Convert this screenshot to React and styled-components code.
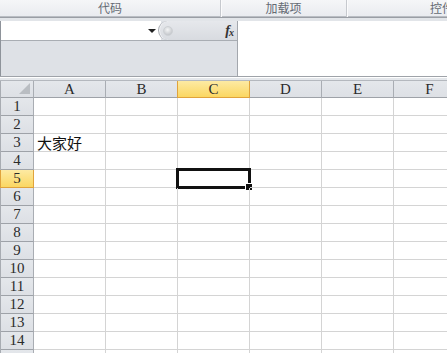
import React from 'react'
import styled, { createGlobalStyle } from 'styled-components'

const GlobalStyle = createGlobalStyle`
    html, body {
        margin: 0;
        padding: 0;
        background: #ffffff;
        overflow: hidden;
    }
    * {
        box-sizing: border-box;
    }
`

const COLUMNS = ['A', 'B', 'C', 'D', 'E', 'F']
const ROWS = Array.from({ length: 15 }, (_, i) => i + 1)
const ACTIVE = { col: 'C', row: 5 }
const CELLS = { A3: '大家好' }

const Page = styled('div')`
    width: 447px;
    height: 353px;
    overflow: hidden;
    font-family: 'Noto Sans CJK SC', sans-serif;
`

const RibbonTabs = styled('div')`
    display: flex;
    height: 18px;
    background: linear-gradient(#f5f6f8, #e9ebef);
    border-bottom: 1px solid #9a9ea5;
    box-shadow: inset 0 -1px 0 #b9bdc3;
`

const TabGroup = styled('div')`
    flex: 0 0 ${({ width }) => width}px;
    display: flex;
    justify-content: ${({ align }) => align || 'center'};
    padding-left: ${({ indent }) => indent || 0}px;
    font-size: 12px;
    line-height: 16px;
    color: #646a73;
    border-right: 1px solid #c6c9ce;
    box-shadow: 1px 0 0 #fbfbfc;
    white-space: nowrap;
`

const Band = styled('div')`
    height: 3px;
    background: #e2e5e9;
`

const FormulaBar = styled('div')`
    display: flex;
    height: 56px;
    border-bottom: 1px solid #9fa3a9;
`

const LeftPanel = styled('div')`
    width: 238px;
    display: flex;
    flex-direction: column;
    background: #dee1e6;
    border-left: 1px solid #8e939a;
    border-right: 1px solid #a3a7ad;
`

const NameRow = styled('div')`
    display: flex;
    height: 20px;
    border-bottom: 1px solid #a9adb3;
`

const NameBox = styled('div')`
    width: 160px;
    background: #ffffff;
    display: flex;
    align-items: center;
    justify-content: flex-end;
    padding-right: 5px;
`

const DropArrow = styled('span')`
    width: 0;
    height: 0;
    border-left: 4px solid transparent;
    border-right: 4px solid transparent;
    border-top: 4px solid #222;
`

const FxBox = styled('div')`
    flex: 1;
    display: flex;
    align-items: center;
    justify-content: space-between;
    padding: 0 4px 0 4px;
    background: linear-gradient(#e6e8ec, #d8dbe0);
    border-left: 1px solid #a9adb3;
    border-radius: 10px 0 0 10px;
    margin-left: -3px;
    box-shadow: inset 1px 0 0 #f4f5f7;
`

const Knob = styled('span')`
    width: 10px;
    height: 10px;
    border-radius: 50%;
    background: radial-gradient(circle at 45% 35%, #f4f5f6, #b5b9be);
    border: 1px solid #cdd0d4;
`

const FxLabel = styled('span')`
    font-family: 'Liberation Serif', serif;
    font-style: italic;
    font-weight: bold;
    font-size: 14px;
    color: #333;
    letter-spacing: -1px;
    & sub {
        font-size: 10px;
        vertical-align: -1px;
    }
`

const FormulaInput = styled('div')`
    flex: 1;
    background: #ffffff;
`

const Gap = styled('div')`
    height: 4px;
    background: #e4e7eb;
    border-top: 1px solid #ffffff;
    border-bottom: 1px solid #b4b8be;
`

const Grid = styled('div')`
    display: grid;
    grid-template-columns: 33px repeat(6, 72px);
    grid-auto-rows: 18px;
    grid-template-rows: 17px;
    border-left: 1px solid #a8acb2;
`

const HeaderCell = styled('div')`
    display: flex;
    align-items: center;
    justify-content: center;
    font-family: 'Liberation Serif', 'DejaVu Serif', serif;
    font-size: 15px;
    color: #2b2b2b;
    background: ${({ active }) =>
        active ? 'linear-gradient(#fdeaa3, #fbd762)' : 'linear-gradient(#e4e7eb, #dde0e5)'};
    border-right: 1px solid ${({ active }) => (active ? '#e0a33c' : '#a9adb3')};
    border-bottom: 1px solid ${({ active }) => (active ? '#e0a33c' : '#9ea2a8')};
    border-left: ${({ active }) => (active ? '1px solid #e0a33c' : 'none')};
    margin-left: ${({ active }) => (active ? '-1px' : '0')};
`

const Corner = styled(HeaderCell)`
    position: relative;
    &::after {
        content: '';
        position: absolute;
        right: 3px;
        bottom: 3px;
        border-left: 11px solid transparent;
        border-bottom: 11px solid #b9bdc2;
    }
`

const Cell = styled('div')`
    position: relative;
    display: flex;
    align-items: center;
    padding-left: 3px;
    font-family: 'Noto Sans CJK SC', sans-serif;
    font-size: 15px;
    color: #111;
    white-space: nowrap;
    border-right: 1px solid #d4d4d4;
    border-bottom: 1px solid #d4d4d4;
`

const Selection = styled('span')`
    position: absolute;
    left: -2px;
    top: -2px;
    right: -2px;
    bottom: -2px;
    border: 3px solid #111;
    pointer-events: none;
    &::after {
        content: '';
        position: absolute;
        right: -5px;
        bottom: -5px;
        width: 6px;
        height: 6px;
        background: #111;
        border: 1px solid #fff;
    }
`

export default function App() {
    return (
        <Page>
            <GlobalStyle />
            <RibbonTabs>
                <TabGroup width={221}>代码</TabGroup>
                <TabGroup width={126}>加载项</TabGroup>
                <TabGroup width={100} align="flex-start" indent={83}>控件</TabGroup>
            </RibbonTabs>
            <Band />
            <FormulaBar>
                <LeftPanel>
                    <NameRow>
                        <NameBox>
                            <DropArrow />
                        </NameBox>
                        <FxBox>
                            <Knob />
                            <FxLabel>f<sub>x</sub></FxLabel>
                        </FxBox>
                    </NameRow>
                </LeftPanel>
                <FormulaInput />
            </FormulaBar>
            <Gap />
            <Grid>
                <Corner />
                {COLUMNS.map((c) => (
                    <HeaderCell key={c} active={c === ACTIVE.col}>
                        {c}
                    </HeaderCell>
                ))}
                {ROWS.map((r) => (
                    <React.Fragment key={r}>
                        <HeaderCell active={r === ACTIVE.row}>{r}</HeaderCell>
                        {COLUMNS.map((c) => (
                            <Cell key={c + r}>
                                {CELLS[c + r]}
                                {c === ACTIVE.col && r === ACTIVE.row && <Selection />}
                            </Cell>
                        ))}
                    </React.Fragment>
                ))}
            </Grid>
        </Page>
    )
}
